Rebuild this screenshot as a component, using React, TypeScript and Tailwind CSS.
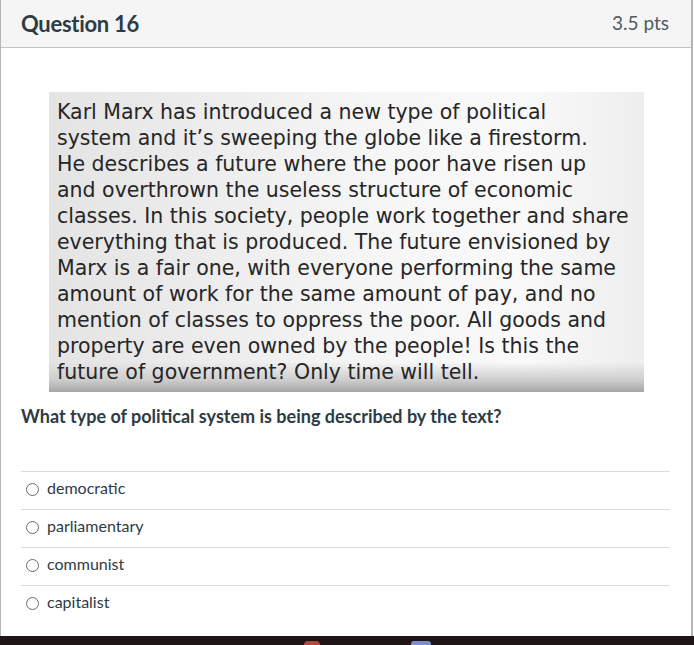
const passage = [
  "Karl Marx has introduced a new type of political",
  "system and it\u2019s sweeping the globe like a firestorm.",
  "He describes a future where the poor have risen up",
  "and overthrown the useless structure of economic",
  "classes. In this society, people work together and share",
  "everything that is produced. The future envisioned by",
  "Marx is a fair one, with everyone performing the same",
  "amount of work for the same amount of pay, and no",
  "mention of classes to oppress the poor. All goods and",
  "property are even owned by the people! Is this the",
  "future of government? Only time will tell.",
];

const answers = ["democratic", "parliamentary", "communist", "capitalist"];

export default function App() {
  return (
    <div className="w-[694px] h-[645px] flex flex-col bg-white font-['Lato','Liberation_Sans',sans-serif] text-[#2d3b45] overflow-hidden">
      <div className="flex-1 flex flex-col border-l border-r-2 border-[#b5b5b5] mr-[1px]">
        <div className="h-[48px] shrink-0 flex items-center justify-between bg-[#f5f5f5] border-b border-[#c4c4c4] pl-[20px] pr-[22px]">
          <h2 className="text-[22px] font-bold tracking-[-0.3px]">Question 16</h2>
          <span className="text-[19px] text-[#4f5a62]">3.5 pts</span>
        </div>
        <div className="flex-1 pt-[44px] pl-[20px] pr-[20px]">
          <div className="ml-[28px] w-[595px] h-[300px] pt-[7px] pl-[8px] bg-[linear-gradient(to_bottom,transparent_90%,#cdcdcd_96%,#a5a5a5),linear-gradient(to_right,#e4e4e4,#f6f6f6_55%,#f9f9f9_80%,#eeeeee)] font-['DejaVu_Sans','Verdana',sans-serif] text-[20.5px] leading-[26px] text-[#262626]">
            {passage.map((line) => (
              <div key={line} className="whitespace-nowrap">{line}</div>
            ))}
          </div>
          <p className="mt-[13px] text-[18px] font-bold leading-[22px]">
            What type of political system is being described by the text?
          </p>
          <div className="mt-[44px] mr-[1px]">
            {answers.map((a) => (
              <label key={a} className="flex items-center h-[38px] border-t border-[#dadcde] text-[16px]">
                <span className="ml-[5px] mb-[3px] w-[13px] h-[13px] rounded-full border border-[#6b6b6b] bg-white" />
                <span className="ml-[8px] pb-[6px]">{a}</span>
              </label>
            ))}
          </div>
        </div>
      </div>
      <div className="h-[9px] shrink-0 bg-[#1f1416] relative">
        <span className="absolute left-[304px] top-[5px] w-[16px] h-[8px] rounded-full bg-[#b2473e]" />
        <span className="absolute left-[411px] top-[5px] w-[20px] h-[8px] rounded-t-[3px] bg-[#7c8fc9]" />
      </div>
    </div>
  );
}
